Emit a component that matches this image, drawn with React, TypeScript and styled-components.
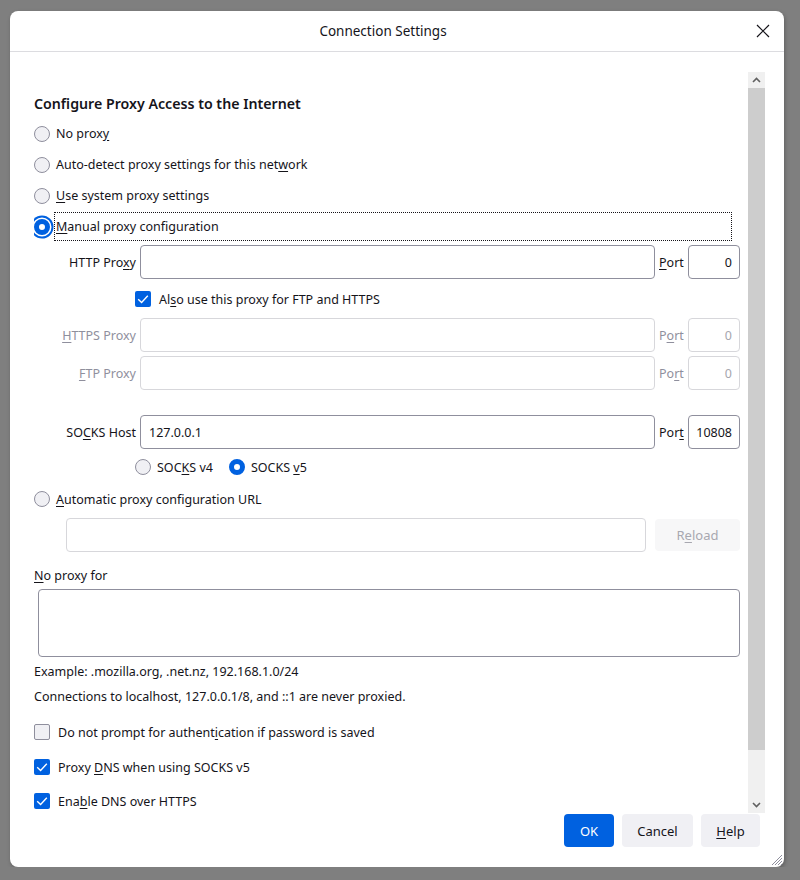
import styled, { createGlobalStyle } from "styled-components";

const GlobalStyle = createGlobalStyle`
  body {
    margin: 0;
    background: #7f7f7f;
    font-family: "Noto Sans", "Open Sans", sans-serif;
    font-size: 12.5px;
    color: #15141a;
  }
`;

const Dialog = styled.div`
  position: relative;
  width: 774px;
  height: 856px;
  margin: 11px 0 0 10px;
  background: #ffffff;
  border-radius: 8px;
  box-shadow: 1px 2px 4px rgba(0, 0, 0, 0.25);
  display: flex;
  flex-direction: column;
`;

const TitleBar = styled.div`
  height: 40px;
  border-bottom: 1px solid #dcdce0;
  display: flex;
  align-items: center;
  position: relative;
  padding-right: 28px;
`;

const Title = styled.div`
  flex: 1;
  text-align: center;
  font-size: 13.5px;
`;

const CloseButton = styled.div`
  position: absolute;
  right: 14px;
  top: 13px;
  width: 14px;
  height: 14px;
  display: flex;
`;

const Body = styled.div`
  height: 741px;
  padding: 20px 19px 0 24px;
  display: flex;
`;

const Content = styled.div`
  flex: 1;
  padding-right: 8px;
  overflow: hidden;
  display: flex;
  flex-direction: column;
`;

const Scrollbar = styled.div`
  width: 17px;
  display: flex;
  flex-direction: column;
  background: #f0f0f0;
`;

const ScrollArrow = styled.div`
  height: 16px;
  display: flex;
  align-items: center;
  justify-content: center;
`;

const ScrollThumb = styled.div`
  height: 662px;
  background: #cdcdcd;
`;

const ScrollTrack = styled.div`
  flex: 1;
`;

const Heading = styled.div`
  margin-top: 22px;
  height: 20px;
  line-height: 20px;
  font-size: 14.2px;
  font-weight: 600;
`;

const Row = styled.div<{ $top?: number; $indent?: number; $height?: number }>`
  display: flex;
  align-items: center;
  margin-top: ${p => p.$top ?? 0}px;
  padding-left: ${p => p.$indent ?? 0}px;
  height: ${p => p.$height ?? 30}px;
  flex-shrink: 0;
`;

const Radio = styled.span<{ $checked?: boolean; $focused?: boolean }>`
  box-sizing: border-box;
  width: 16px;
  height: 16px;
  border-radius: 50%;
  flex-shrink: 0;
  background: ${p => (p.$checked ? "#ffffff" : "#f0f0f4")};
  border: ${p => (p.$checked ? "5px solid #0061e0" : "1px solid #8f8f9d")};
  box-shadow: ${p =>
    p.$focused ? "0 0 0 1.5px #ffffff, 0 0 0 3.5px #0061e0" : "none"};
  margin-right: 6px;
`;

const OptionLabel = styled.span<{ $focused?: boolean; $gap?: number }>`
  margin-right: ${p => p.$gap ?? 0}px;
  ${p =>
    p.$focused &&
    `
    flex: 1;
    height: 27px;
    display: flex;
    align-items: center;
    margin-right: 9px;
    margin-left: -1px;
    padding-left: 1px;
    box-sizing: border-box;
    outline: 1px dotted #15141a;
  `}
`;

const Key = styled.span`
  text-decoration: underline;
  text-underline-offset: 2px;
`;

const FieldRow = styled.div<{ $top: number }>`
  display: grid;
  grid-template-columns: 102px 1fr 25px 52px;
  column-gap: 4px;
  align-items: center;
  height: 34px;
  margin-top: ${p => p.$top}px;
  flex-shrink: 0;
`;

const FieldLabel = styled.span<{ $disabled?: boolean; $left?: boolean }>`
  text-align: ${p => (p.$left ? "left" : "right")};
  white-space: nowrap;
  color: ${p => (p.$disabled ? "#8f8f9d" : "#15141a")};
`;

const TextInput = styled.input`
  box-sizing: border-box;
  width: 100%;
  height: 34px;
  border: 1px solid ${p => (p.disabled ? "#d7d7db" : "#8f8f9d")};
  border-radius: 4px;
  background: #ffffff;
  padding: 0 8px;
  font-family: inherit;
  font-size: 12.5px;
  color: ${p => (p.disabled ? "#a6a6ae" : "#15141a")};
  outline: none;
  &:disabled {
    background: #ffffff;
  }
`;

const PortInput = styled(TextInput)`
  padding: 0 7px 0 2px;
  text-align: right;
`;

const Checkbox = styled.span<{ $checked?: boolean }>`
  box-sizing: border-box;
  width: 16px;
  height: 16px;
  border-radius: 2px;
  flex-shrink: 0;
  display: flex;
  align-items: center;
  justify-content: center;
  background: ${p => (p.$checked ? "#0061e0" : "#f0f0f4")};
  border: ${p => (p.$checked ? "none" : "1px solid #8f8f9d")};
  margin-right: 8px;
`;

const UrlRow = styled.div`
  display: flex;
  align-items: center;
  gap: 9px;
  height: 34px;
  margin-top: 4px;
  padding-left: 32px;
  flex-shrink: 0;
`;

const ReloadButton = styled.div`
  width: 85px;
  height: 32px;
  flex-shrink: 0;
  border-radius: 4px;
  background: #f7f7f8;
  color: #a8a8b0;
  font-size: 13px;
  display: flex;
  align-items: center;
  justify-content: center;
`;

const TextLine = styled.div<{ $top: number }>`
  height: 20px;
  line-height: 20px;
  margin-top: ${p => p.$top}px;
  flex-shrink: 0;
`;

const TextArea = styled.textarea`
  box-sizing: border-box;
  height: 68px;
  margin: 3px 0 0 4px;
  border: 1px solid #8f8f9d;
  border-radius: 4px;
  resize: none;
  font-family: inherit;
  flex-shrink: 0;
  outline: none;
`;

const Footer = styled.div`
  display: flex;
  justify-content: flex-end;
  gap: 8px;
  padding: 1px 24px 0;
`;

const Button = styled.div<{ $primary?: boolean; $width: number }>`
  width: ${p => p.$width}px;
  height: 33px;
  border-radius: 4px;
  display: flex;
  align-items: center;
  justify-content: center;
  font-size: 13px;
  background: ${p => (p.$primary ? "#0061e0" : "#f0f0f4")};
  color: ${p => (p.$primary ? "#ffffff" : "#15141a")};
`;

const Grip = styled.div`
  position: absolute;
  right: 1px;
  bottom: 1px;
  width: 14px;
  height: 14px;
  display: flex;
`;

const CheckMark = () => (
  <svg width="16" height="16" viewBox="0 0 16 16">
    <polyline
      points="3.2,8.2 6.6,11.4 12.8,4.8"
      fill="none"
      stroke="#ffffff"
      strokeWidth="1.4"
    />
  </svg>
);

const Chevron = ({ up }: { up?: boolean }) => (
  <svg width="9" height="6" viewBox="0 0 9 6">
    <polyline
      points={up ? "1,5 4.5,1.5 8,5" : "1,1 4.5,4.5 8,1"}
      fill="none"
      stroke="#606060"
      strokeWidth="1.6"
    />
  </svg>
);

// "Port" with the access key on a different letter per row
const Port = ({ k, disabled }: { k: number; disabled?: boolean }) => {
  const word = "Port";
  return (
    <FieldLabel $disabled={disabled} $left>
      {word.slice(0, k)}
      <Key>{word[k]}</Key>
      {word.slice(k + 1)}
    </FieldLabel>
  );
};

export default function App() {
  return (
    <>
      <GlobalStyle />
      <Dialog>
        <TitleBar>
          <Title>Connection Settings</Title>
          <CloseButton>
            <svg width="14" height="14" viewBox="0 0 14 14">
              <path d="M1 1 L13 13 M13 1 L1 13" stroke="#15141a" strokeWidth="1.2" />
            </svg>
          </CloseButton>
        </TitleBar>

        <Body>
          <Content>
            <Heading>Configure Proxy Access to the Internet</Heading>

            <Row $top={4} $height={31}>
              <Radio />
              <OptionLabel>
                No prox<Key>y</Key>
              </OptionLabel>
            </Row>
            <Row $height={31}>
              <Radio />
              <OptionLabel>
                Auto-detect proxy settings for this net<Key>w</Key>ork
              </OptionLabel>
            </Row>
            <Row $height={31}>
              <Radio />
              <OptionLabel>
                <Key>U</Key>se system proxy settings
              </OptionLabel>
            </Row>
            <Row $height={31}>
              <Radio $checked $focused />
              <OptionLabel $focused>
                <Key>M</Key>anual proxy configuration
              </OptionLabel>
            </Row>

            <FieldRow $top={3}>
              <FieldLabel>
                HTTP Pro<Key>x</Key>y
              </FieldLabel>
              <TextInput readOnly defaultValue="" />
              <Port k={0} />
              <PortInput readOnly defaultValue="0" />
            </FieldRow>

            <Row $top={5} $indent={101}>
              <Checkbox $checked>
                <CheckMark />
              </Checkbox>
              <span>
                Al<Key>s</Key>o use this proxy for FTP and HTTPS
              </span>
            </Row>

            <FieldRow $top={4}>
              <FieldLabel $disabled>
                <Key>H</Key>TTPS Proxy
              </FieldLabel>
              <TextInput disabled defaultValue="" />
              <Port k={1} disabled />
              <PortInput disabled defaultValue="0" />
            </FieldRow>
            <FieldRow $top={4}>
              <FieldLabel $disabled>
                <Key>F</Key>TP Proxy
              </FieldLabel>
              <TextInput disabled defaultValue="" />
              <Port k={2} disabled />
              <PortInput disabled defaultValue="0" />
            </FieldRow>

            <FieldRow $top={25}>
              <FieldLabel>
                SO<Key>C</Key>KS Host
              </FieldLabel>
              <TextInput readOnly defaultValue="127.0.0.1" />
              <Port k={3} />
              <PortInput readOnly defaultValue="10808" />
            </FieldRow>

            <Row $top={3} $indent={101}>
              <Radio />
              <OptionLabel $gap={16}>
                SOC<Key>K</Key>S v4
              </OptionLabel>
              <Radio $checked />
              <OptionLabel>
                SOCKS <Key>v</Key>5
              </OptionLabel>
            </Row>

            <Row $top={2}>
              <Radio />
              <OptionLabel>
                <Key>A</Key>utomatic proxy configuration URL
              </OptionLabel>
            </Row>

            <UrlRow>
              <TextInput disabled defaultValue="" />
              <ReloadButton>
                R<Key>e</Key>load
              </ReloadButton>
            </UrlRow>

            <TextLine $top={14}>
              <Key>N</Key>o proxy for
            </TextLine>
            <TextArea readOnly defaultValue="" />
            <TextLine $top={5}>Example: .mozilla.org, .net.nz, 192.168.1.0/24</TextLine>
            <TextLine $top={5}>
              Connections to localhost, 127.0.0.1/8, and ::1 are never proxied.
            </TextLine>

            <Row $top={10}>
              <Checkbox />
              <span>
                Do not prompt for authent<Key>i</Key>cation if password is saved
              </span>
            </Row>
            <Row $top={5}>
              <Checkbox $checked>
                <CheckMark />
              </Checkbox>
              <span>
                Proxy <Key>D</Key>NS when using SOCKS v5
              </span>
            </Row>
            <Row $top={4}>
              <Checkbox $checked>
                <CheckMark />
              </Checkbox>
              <span>
                Ena<Key>b</Key>le DNS over HTTPS
              </span>
            </Row>
          </Content>

          <Scrollbar>
            <ScrollArrow>
              <Chevron up />
            </ScrollArrow>
            <ScrollThumb />
            <ScrollTrack />
            <ScrollArrow>
              <Chevron />
            </ScrollArrow>
          </Scrollbar>
        </Body>

        <Footer>
          <Button $primary $width={50}>
            OK
          </Button>
          <Button $width={71}>Cancel</Button>
          <Button $width={59}>
            <Key>H</Key>elp
          </Button>
        </Footer>

        <Grip>
          <svg width="14" height="14" viewBox="0 0 14 14">
            <path
              d="M13 3 L3 13 M13 6 L6 13 M13 9 L9 13 M13 12 L12 13"
              stroke="#8f8f9d"
              strokeWidth="1"
            />
          </svg>
        </Grip>
      </Dialog>
    </>
  );
}
